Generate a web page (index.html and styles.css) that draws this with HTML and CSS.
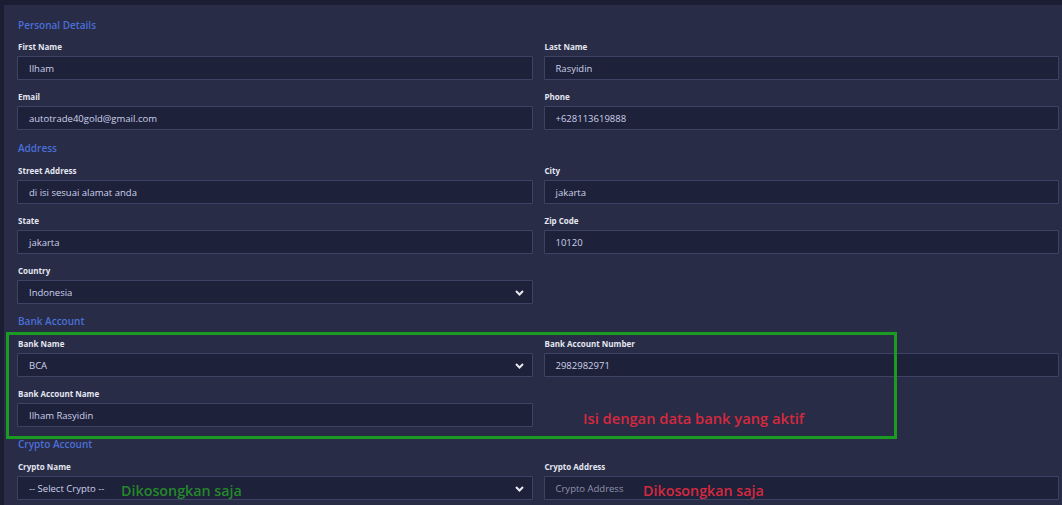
FILE: index.html
```html
<!DOCTYPE html>
<html>
<head>
<meta charset="utf-8">
<link rel="stylesheet" href="styles.css">
</head>
<body>
<div class="card">
  <h3 class="section first">Personal Details</h3>
  <div class="grid">
    <div class="field"><label>First Name</label><div class="input">Ilham</div></div>
    <div class="field"><label>Last Name</label><div class="input">Rasyidin</div></div>
    <div class="field"><label>Email</label><div class="input">autotrade40gold@gmail.com</div></div>
    <div class="field"><label>Phone</label><div class="input">+628113619888</div></div>
  </div>
  <h3 class="section addr">Address</h3>
  <div class="grid">
    <div class="field"><label>Street Address</label><div class="input">di isi sesuai alamat anda</div></div>
    <div class="field"><label>City</label><div class="input">jakarta</div></div>
    <div class="field"><label>State</label><div class="input">jakarta</div></div>
    <div class="field"><label>Zip Code</label><div class="input">10120</div></div>
    <div class="field"><label>Country</label><div class="input select">Indonesia<svg class="chev" width="9" height="6" viewBox="0 0 9 6"><polyline points="1,1 4.5,4.5 8,1" fill="none" stroke="#e6e8f2" stroke-width="2"/></svg></div></div>
  </div>
  <h3 class="section">Bank Account</h3>
  <div class="grid">
    <div class="field"><label>Bank Name</label><div class="input select">BCA<svg class="chev" width="9" height="6" viewBox="0 0 9 6"><polyline points="1,1 4.5,4.5 8,1" fill="none" stroke="#e6e8f2" stroke-width="2"/></svg></div></div>
    <div class="field"><label>Bank Account Number</label><div class="input">2982982971</div></div>
    <div class="field"><label>Bank Account Name</label><div class="input">Ilham Rasyidin</div></div>
  </div>
  <h3 class="section">Crypto Account</h3>
  <div class="grid">
    <div class="field"><label>Crypto Name</label><div class="input select">-- Select Crypto --<svg class="chev" width="9" height="6" viewBox="0 0 9 6"><polyline points="1,1 4.5,4.5 8,1" fill="none" stroke="#e6e8f2" stroke-width="2"/></svg></div></div>
    <div class="field"><label>Crypto Address</label><div class="input placeholder">Crypto Address</div></div>
  </div>

  <div class="green-box"></div>
  <div class="note red note-bank">Isi dengan data bank yang aktif</div>
  <div class="note green note-crypto">Dikosongkan saja</div>
  <div class="note red note-address">Dikosongkan saja</div>
</div>
</body>
</html>
```
FILE: styles.css
```css
html, body {
  margin: 0;
  padding: 0;
  background: #1b1e33;
  font-family: "Open Sans", "Noto Sans", sans-serif;
}
.card {
  position: relative;
  margin: 5px 0 0 4px;
  padding: 13px 3px 20px 13px;
  background: #282c46;
  min-height: 480px;
}
.section {
  margin: 10px 0 11px 1px;
  font-size: 10px;
  line-height: 14px;
  font-weight: 600;
  color: #4b6fd8;
}
.section.addr {
  margin-top: 11px;
}
.section.first {
  margin-top: 0;
  margin-bottom: 10px;
}
.grid {
  display: grid;
  grid-template-columns: 1fr 1fr;
  column-gap: 11px;
  row-gap: 12px;
}
.field {
  display: flex;
  flex-direction: column;
}
.field label {
  font-size: 8px;
  line-height: 10px;
  font-weight: 700;
  color: #e4e6f1;
  margin: 0 0 4px 1px;
}
.input {
  position: relative;
  box-sizing: border-box;
  height: 24px;
  padding: 0 11px;
  display: flex;
  align-items: center;
  background: #1e213a;
  border: 1px solid #3e4363;
  border-radius: 1px;
  font-size: 9.5px;
  color: #cdd1ea;
}
.input.placeholder {
  color: #8f94ad;
}
.chev {
  position: absolute;
  right: 8px;
  top: 9px;
}
.green-box {
  position: absolute;
  left: 2px;
  top: 327px;
  box-sizing: border-box;
  width: 891px;
  height: 107px;
  border: 3px solid #1b9b22;
}
.note {
  position: absolute;
  line-height: 18px;
  white-space: nowrap;
  font-weight: 600;
}
.note.red { color: #d6293e; }
.note.green { color: #24882a; }
.note-bank { left: 579px; top: 404px; font-size: 14.7px; }
.note-crypto { left: 117px; top: 477px; font-size: 14.3px; }
.note-address { left: 639px; top: 477px; font-size: 14.3px; }
```
